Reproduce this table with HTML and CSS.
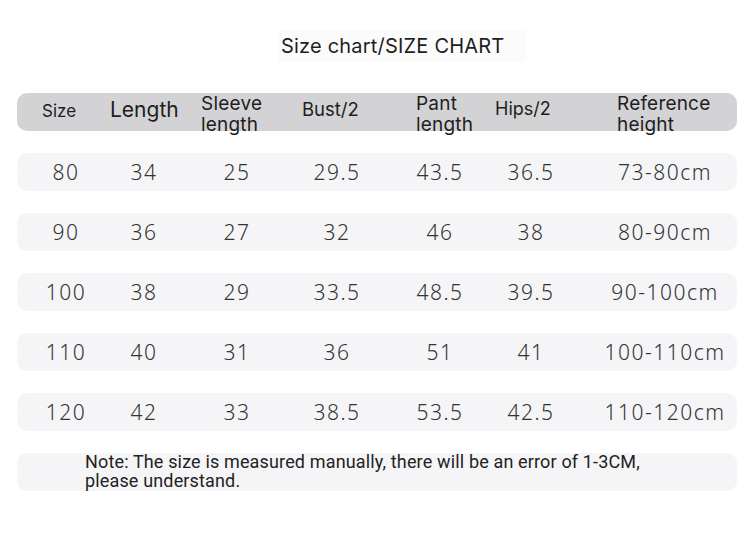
FILE: index.html
```html
<!DOCTYPE html>
<html>
<head>
<meta charset="utf-8">
<link rel="stylesheet" href="styles.css">
</head>
<body>
<div class="page">
  <div class="title-wrap"><h1 class="title">Size chart/SIZE CHART</h1></div>
  <div class="table">
    <div class="bar head">
      <div class="h h-size">Size</div>
      <div class="h h-len">Length</div>
      <div class="h h-two">Sleeve<br>length</div>
      <div class="h h-bust">Bust/2</div>
      <div class="h h-two">Pant<br>length</div>
      <div class="h h-hips">Hips/2</div>
      <div class="h h-two">Reference<br>height</div>
    </div>
    <div class="bar row"><span class="c1">80</span><span class="c2">34</span><span class="c3">25</span><span class="c4">29.5</span><span class="c5">43.5</span><span class="c6">36.5</span><span class="c7">73-80cm</span></div>
    <div class="bar row"><span class="c1">90</span><span class="c2">36</span><span class="c3">27</span><span class="c4">32</span><span class="c5">46</span><span class="c6">38</span><span class="c7">80-90cm</span></div>
    <div class="bar row"><span class="c1">100</span><span class="c2">38</span><span class="c3">29</span><span class="c4">33.5</span><span class="c5">48.5</span><span class="c6">39.5</span><span class="c7">90-100cm</span></div>
    <div class="bar row"><span class="c1">110</span><span class="c2">40</span><span class="c3">31</span><span class="c4">36</span><span class="c5">51</span><span class="c6">41</span><span class="c7">100-110cm</span></div>
    <div class="bar row"><span class="c1">120</span><span class="c2">42</span><span class="c3">33</span><span class="c4">38.5</span><span class="c5">53.5</span><span class="c6">42.5</span><span class="c7">110-120cm</span></div>
    <div class="bar note">
      <p class="note-text">Note: The size is measured manually, there will be an error of 1-3CM,<br>please understand.</p>
    </div>
  </div>
</div>
</body>
</html>
```

FILE: styles.css
```css
* { box-sizing: border-box; }
html, body { margin: 0; padding: 0; background: #ffffff; }
body { width: 750px; height: 559px; overflow: hidden; color: #2a2a2a; }

.page { padding-top: 30px; }

.title-wrap {
  display: flex;
  justify-content: flex-start;
  padding-left: 278px;
}
.title {
  margin: 0;
  width: 249px;
  height: 32px;
  padding-left: 3px;
  font: 400 20px/32px Inter, "Noto Sans", sans-serif;
  letter-spacing: 0.2px;
  color: #1e1e1e;
  background: #fbfbfb;
  border-radius: 4px;
  white-space: nowrap;
}

.table {
  margin: 31px 0 0 17px;
  width: 720px;
  display: flex;
  flex-direction: column;
  gap: 22px;
}

.bar {
  height: 38px;
  border-radius: 10px;
  background: #f5f5f7;
}

.head {
  background: #d3d3d5;
  display: grid;
  grid-template-columns: 68px 91px 101px 114px 79px 122px 1fr;
  align-items: center;
  padding-left: 25px;
  font-family: Inter, "Noto Sans", sans-serif;
  color: #1e1e1e;
}
.h { white-space: nowrap; }
.h-size { font-size: 17px; margin-top: -7px; }
.h-len { font-size: 21px; margin-top: -10px; }
.h-bust { font-size: 18.5px; margin-top: -11px; }
.h-hips { font-size: 18px; margin-top: -11px; }
.h-two { font-size: 19px; line-height: 21px; letter-spacing: 0.2px; margin-top: 0; }

.row {
  display: grid;
  grid-template-columns: 88px 86px 96px 102px 97px 112px 139px;
  align-items: center;
  font: 300 21px/1 "Noto Sans", "Open Sans", sans-serif;
  letter-spacing: 1.5px;
  color: #333333;
}
.row span { text-align: center; white-space: nowrap; }
.c1 { padding-left: 10px; }
.c2 { padding-right: 8px; }
.c3 { padding-right: 4px; }
.c4 { padding-right: 2px; }
.c5 { padding-left: 5px; }
.c6 { padding-right: 22px; }
.c7 { padding-right: 5px; }

.note { padding-left: 68px; }
.note-text {
  margin: 0;
  padding-top: 0;
  margin-top: -1px;
  font: 400 18px/19px Roboto, "Noto Sans", sans-serif;
  letter-spacing: 0.15px;
  color: #222222;
  white-space: nowrap;
}
```
